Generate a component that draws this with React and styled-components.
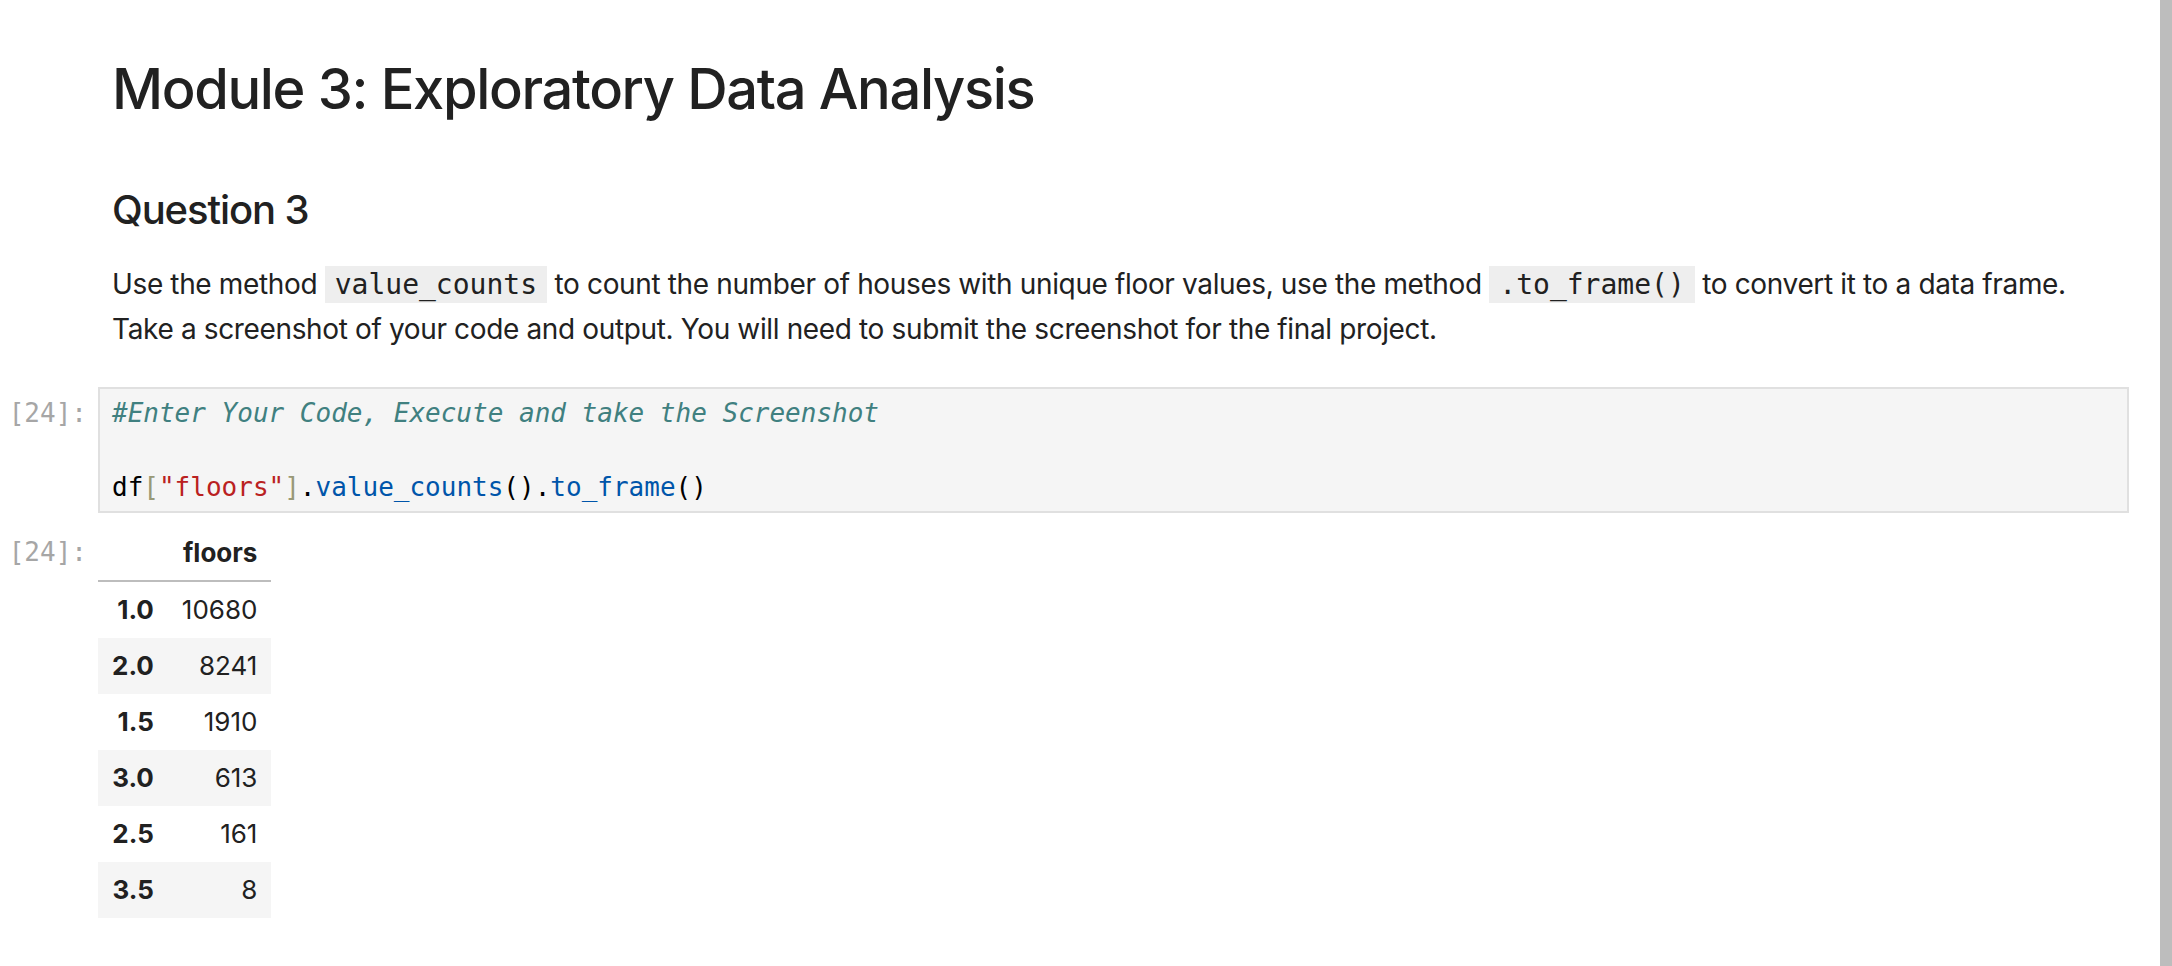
import React from 'react';
import styled, { createGlobalStyle } from 'styled-components';

const GlobalStyle = createGlobalStyle`
  html, body { margin: 0; padding: 0; background: #ffffff; }
  body {
    font-family: Inter, "Noto Sans", "Liberation Sans", sans-serif;
    color: #212121;
  }
`;

const Page = styled.div`
  display: flex;
  height: 966px;
  overflow: hidden;
`;

const Notebook = styled.main`
  flex: 1;
  display: flex;
  flex-direction: column;
  padding: 55px 31px 0 0;
  min-width: 0;
`;

const Scrollbar = styled.div`
  flex: none;
  width: 12px;
  background: #bdbdbd;
`;

const Cell = styled.section`
  display: grid;
  grid-template-columns: 98px 1fr;
  margin-top: ${(p) => p.$mt || 0}px;
`;

const Prompt = styled.div`
  font-family: "DejaVu Sans Mono", "Liberation Mono", monospace;
  font-size: 26px;
  line-height: 37px;
  color: #a6a6a6;
  text-align: right;
  padding: ${(p) => p.$pt || 0}px 11px 0 0;
  white-space: nowrap;
`;

const Markdown = styled.div`
  padding: 0 14px;
`;

const Title = styled.h1`
  margin: 0 0 63px;
  font-size: 56px;
  line-height: 68px;
  font-weight: 500;
  letter-spacing: -1.35px;
`;

const Subtitle = styled.h3`
  margin: 0 0 28px;
  font-size: 40px;
  line-height: 48px;
  font-weight: 500;
  letter-spacing: -1.1px;
`;

const Paragraph = styled.p`
  margin: 0;
  font-size: 28px;
  line-height: 44px;
  letter-spacing: -0.36px;
`;

const InlineCode = styled.code`
  font-family: "DejaVu Sans Mono", "Liberation Mono", monospace;
  font-size: 28px;
  letter-spacing: 0;
  background: #eeeeee;
  padding: 2px 10px;
`;

const Editor = styled.pre`
  margin: 0;
  border: 2px solid #e0e0e0;
  background: #f5f5f5;
  padding: 6px 12px 5px;
  font-family: "DejaVu Sans Mono", "Liberation Mono", monospace;
  font-size: 26px;
  line-height: 37px;
  color: #000000;
  white-space: pre;
`;

const Tok = styled.span`
  color: ${(p) => p.$c};
  font-style: ${(p) => (p.$italic ? 'italic' : 'normal')};
`;

const Output = styled.div`
  padding: 0;
`;

const Frame = styled.table`
  border-collapse: collapse;
  border-spacing: 0;
  font-size: 26px;
  line-height: 28px;
  color: #212121;
`;

const HeadCell = styled.th`
  text-align: right;
  font-weight: 700;
  padding: 13px 14px;
  border-bottom: 2px solid #bdbdbd;
`;

const Row = styled.tr`
  background: ${(p) => (p.$striped ? '#f5f5f5' : 'transparent')};
`;

const IndexCell = styled.th`
  text-align: right;
  font-weight: 700;
  padding: 14px;
`;

const ValueCell = styled.td`
  text-align: right;
  padding: 14px;
`;

const rows = [
  ['1.0', '10680'],
  ['2.0', '8241'],
  ['1.5', '1910'],
  ['3.0', '613'],
  ['2.5', '161'],
  ['3.5', '8'],
];

export default function App() {
  return (
    <>
      <GlobalStyle />
      <Page>
        <Notebook>
          <Cell>
            <div />
            <Markdown>
              <Title>Module 3: Exploratory Data Analysis</Title>
              <Subtitle>Question 3</Subtitle>
              <Paragraph>
                Use the method <InlineCode>value_counts</InlineCode> to count the number of houses with unique floor values, use the method <InlineCode>.to_frame()</InlineCode> to convert it to a data frame. Take a screenshot of your code and output. You will need to submit the screenshot for the final project.
              </Paragraph>
            </Markdown>
          </Cell>

          <Cell $mt={36}>
            <Prompt $pt={8}>[24]:</Prompt>
            <Editor>
              <Tok $c="#408080" $italic>#Enter Your Code, Execute and take the Screenshot</Tok>
              {'\n\n'}
              <Tok $c="#000000">df</Tok>
              <Tok $c="#999977">[</Tok>
              <Tok $c="#ba2121">"floors"</Tok>
              <Tok $c="#999977">]</Tok>
              <Tok $c="#000000">.</Tok>
              <Tok $c="#0055aa">value_counts</Tok>
              <Tok $c="#000000">().</Tok>
              <Tok $c="#0055aa">to_frame</Tok>
              <Tok $c="#000000">()</Tok>
            </Editor>
          </Cell>

          <Cell $mt={13}>
            <Prompt $pt={8}>[24]:</Prompt>
            <Output>
              <Frame>
                <thead>
                  <tr>
                    <HeadCell />
                    <HeadCell>floors</HeadCell>
                  </tr>
                </thead>
                <tbody>
                  {rows.map(([idx, val], i) => (
                    <Row key={idx} $striped={i % 2 === 1}>
                      <IndexCell>{idx}</IndexCell>
                      <ValueCell>{val}</ValueCell>
                    </Row>
                  ))}
                </tbody>
              </Frame>
            </Output>
          </Cell>
        </Notebook>
        <Scrollbar />
      </Page>
    </>
  );
}
